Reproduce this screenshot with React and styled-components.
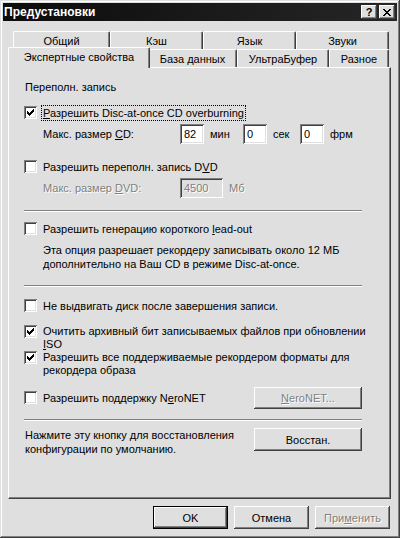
import React from "react";
import styled, { createGlobalStyle, css } from "styled-components";

const FACE = "#dfdfdf";
const SHADOW = "#808080";
const DARK = "#404040";
const LIGHT = "#ffffff";

const GlobalStyle = createGlobalStyle`
  html, body {
    margin: 0;
    padding: 0;
    background: ${FACE};
  }
  body {
    font-family: "Liberation Sans", Arial, sans-serif;
    font-size: 11px;
    color: #000;
  }
`;

const raised = css`
  box-shadow: inset -1px -1px ${DARK}, inset 1px 1px ${LIGHT},
    inset -2px -2px ${SHADOW}, inset 2px 2px ${FACE};
`;

const sunken = css`
  box-shadow: inset 1px 1px ${SHADOW}, inset -1px -1px ${LIGHT},
    inset 2px 2px ${DARK}, inset -2px -2px ${FACE};
`;

const disabledText = css`
  color: ${SHADOW};
  text-shadow: 1px 1px ${LIGHT};
`;

const Window = styled.div`
  width: 400px;
  height: 538px;
  box-sizing: border-box;
  padding: 3px;
  background: ${FACE};
  box-shadow: inset -1px -1px ${DARK}, inset 1px 1px ${FACE},
    inset -2px -2px ${SHADOW}, inset 2px 2px ${LIGHT};
  display: flex;
  flex-direction: column;
`;

const TitleBar = styled.div`
  height: 18px;
  display: flex;
  align-items: center;
  padding: 0 2px 0 1px;
  background: linear-gradient(to right, #0c0c0c, #262626);
  color: #fff;
`;

const Title = styled.div`
  flex: 1;
  font-weight: bold;
  font-size: 12px;
`;

const CaptionButton = styled.div`
  width: 16px;
  height: 14px;
  margin-left: ${({ $gap }) => $gap}px;
  background: ${FACE};
  ${raised};
  display: flex;
  align-items: center;
  justify-content: center;
  color: #000;
  font-weight: bold;
  font-size: 11px;
  line-height: 1;
`;

const Body = styled.div`
  flex: 1;
  display: flex;
  flex-direction: column;
  padding: 10px 6px 0 5px;
`;

const TabRow = styled.div`
  display: flex;
  align-items: flex-start;
  height: 18px;
  padding-left: ${({ $indent }) => $indent}px;
`;

const Tab = styled.div`
  width: ${({ $w }) => $w}px;
  height: 18px;
  box-sizing: border-box;
  flex: none;
  display: flex;
  align-items: center;
  justify-content: center;
  background: ${FACE};
  border-top: 1px solid ${LIGHT};
  border-left: 1px solid ${LIGHT};
  border-right: 1px solid ${DARK};
  border-radius: 2px 2px 0 0;
  box-shadow: inset -1px 0 ${SHADOW};
  white-space: nowrap;
  ${({ $active, $w }) =>
    $active &&
    css`
      position: relative;
      z-index: 2;
      width: ${$w + 4}px;
      height: 21px;
      margin: -2px -2px 0 -2px;
      padding-bottom: 2px;
    `}
`;

const Panel = styled.div`
  height: 432px;
  box-sizing: border-box;
  border-top: 1px solid ${LIGHT};
  border-left: 1px solid ${LIGHT};
  border-right: 1px solid ${DARK};
  border-bottom: 1px solid ${DARK};
  box-shadow: inset -1px -1px ${SHADOW};
  padding: 12px 28px 0 15px;
  display: flex;
  flex-direction: column;
`;

const Heading = styled.div`
  line-height: 14px;
  padding-left: 1px;
`;

const CheckRow = styled.div`
  display: flex;
  align-items: flex-start;
  margin-top: ${({ $top }) => $top || 0}px;
`;

const Box = styled.div`
  width: 13px;
  height: 13px;
  flex: none;
  box-sizing: border-box;
  background: #fff;
  ${sunken};
  display: flex;
  align-items: center;
  justify-content: center;
`;

const Label = styled.div`
  margin-left: 6px;
  line-height: ${({ $lh }) => $lh || 14}px;
  white-space: nowrap;
  ${({ $focus }) =>
    $focus &&
    css`
      outline: 1px dotted #000;
      outline-offset: 0;
      margin-left: 5px;
      padding: 0 1px;
    `}
`;

const SizeRow = styled.div`
  display: flex;
  align-items: center;
  height: 20px;
  margin-top: ${({ $top }) => $top}px;
  padding-left: 19px;
  ${({ $disabled }) => $disabled && disabledText};
`;

const SizeLabel = styled.div`
  width: 137px;
  flex: none;
`;

const Field = styled.div`
  width: ${({ $w }) => $w}px;
  height: 20px;
  box-sizing: border-box;
  flex: none;
  padding: 3px 3px 0 4px;
  line-height: 14px;
  background: ${({ $disabled }) => ($disabled ? FACE : "#fff")};
  ${sunken};
`;

const Unit = styled.div`
  width: ${({ $w }) => $w}px;
  flex: none;
  box-sizing: border-box;
  padding-left: 6px;
`;

const Separator = styled.div`
  height: 0;
  border-top: 1px solid ${SHADOW};
  border-bottom: 1px solid ${LIGHT};
  margin-top: ${({ $top }) => $top}px;
`;

const Note = styled.div`
  margin-top: ${({ $top }) => $top}px;
  padding-left: 19px;
  line-height: 14px;
  white-space: nowrap;
`;

const ActionRow = styled.div`
  display: flex;
  justify-content: space-between;
  align-items: ${({ $align }) => $align || "center"};
  margin-top: ${({ $top }) => $top}px;
`;

const ActionText = styled.div`
  line-height: 14px;
  padding-left: 1px;
  white-space: nowrap;
`;

const Button = styled.div`
  width: ${({ $w }) => $w || 75}px;
  height: ${({ $h }) => $h || 23}px;
  box-sizing: border-box;
  flex: none;
  display: flex;
  align-items: center;
  justify-content: center;
  background: ${FACE};
  ${raised};
  ${({ $disabled }) => $disabled && disabledText};
  ${({ $default }) =>
    $default &&
    css`
      border: 1px solid #000;
      box-shadow: inset -1px -1px ${DARK}, inset 1px 1px ${LIGHT},
        inset -2px -2px ${SHADOW};
    `}
`;

const Footer = styled.div`
  display: flex;
  justify-content: flex-end;
  gap: 6px;
  margin-top: 7px;
  padding-right: 1px;
`;

const Key = styled.span`
  text-decoration: underline;
`;

const Tick = () => (
  <svg width="7" height="7" viewBox="0 0 7 7" shapeRendering="crispEdges">
    <path
      fill="#000"
      d="M6 0h1v1h-1zM5 1h2v1h-2zM0 2h1v1h-1zM4 2h3v1h-3zM0 3h2v1h-2zM3 3h3v1h-3zM0 4h5v1h-5zM1 5h3v1h-3zM2 6h1v1h-1z"
    />
  </svg>
);

const CloseGlyph = () => (
  <svg width="8" height="7" viewBox="0 0 8 7" shapeRendering="crispEdges">
    <path
      fill="#000"
      d="M0 0h2v1h-2zM6 0h2v1h-2zM1 1h2v1h-2zM5 1h2v1h-2zM2 2h4v1h-4zM3 3h2v1h-2zM2 4h4v1h-4zM1 5h2v1h-2zM5 5h2v1h-2zM0 6h2v1h-2zM6 6h2v1h-2z"
    />
  </svg>
);

const Check = ({ checked, top, lh, focus, children }) => (
  <CheckRow $top={top}>
    <Box>{checked && <Tick />}</Box>
    <Label $lh={lh} $focus={focus}>
      {children}
    </Label>
  </CheckRow>
);

const backTabs = [
  { label: "Общий", w: 97 },
  { label: "Кэш", w: 93 },
  { label: "Язык", w: 93 },
  { label: "Звуки", w: 93 },
];

const frontTabs = [
  { label: "Экспертные свойства", w: 138, active: true },
  { label: "База данных", w: 89 },
  { label: "УльтраБуфер", w: 92 },
  { label: "Разное", w: 60 },
];

export default function App() {
  return (
    <>
      <GlobalStyle />
      <Window>
        <TitleBar>
          <Title>Предустановки</Title>
          <CaptionButton $gap={0}>?</CaptionButton>
          <CaptionButton $gap={2}>
            <CloseGlyph />
          </CaptionButton>
        </TitleBar>
        <Body>
          <TabRow $indent={5}>
            {backTabs.map((t) => (
              <Tab key={t.label} $w={t.w}>
                {t.label}
              </Tab>
            ))}
          </TabRow>
          <TabRow $indent={2}>
            {frontTabs.map((t) => (
              <Tab key={t.label} $w={t.w} $active={t.active}>
                {t.label}
              </Tab>
            ))}
          </TabRow>
          <Panel>
            <Heading>Переполн. запись</Heading>
            <Check checked top={12} focus>
              <Key>Р</Key>азрешить Disc-at-once CD overburning
            </Check>
            <SizeRow $top={4}>
              <SizeLabel>
                Макс. размер <Key>C</Key>D:
              </SizeLabel>
              <Field $w={24}>82</Field>
              <Unit $w={39}>мин</Unit>
              <Field $w={24}>0</Field>
              <Unit $w={33}>сек</Unit>
              <Field $w={24}>0</Field>
              <Unit $w={40}>фрм</Unit>
            </SizeRow>
            <Check top={16}>
              Разрешить переполн. запись D<Key>V</Key>D
            </Check>
            <SizeRow $top={4} $disabled>
              <SizeLabel>
                Макс. размер <Key>D</Key>VD:
              </SizeLabel>
              <Field $w={43} $disabled>
                4500
              </Field>
              <Unit $w={30}>Мб</Unit>
            </SizeRow>
            <Separator $top={12} />
            <Check top={10}>
              Разрешить генерацию короткого <Key>l</Key>ead-out
            </Check>
            <Note $top={7}>
              Эта опция разрешает рекордеру записывать около 12 МБ
              <br />
              дополнительно на Ваш CD в режиме Disc-at-once.
            </Note>
            <Separator $top={14} />
            <Check top={12}>Не выдвигать диск после завершения записи.</Check>
            <Check checked top={12} lh={13}>
              Очитить архивный бит записываемых файлов при обновлении
              <br />
              <Key>I</Key>SO
            </Check>
            <Check checked lh={13}>
              Разрешить все поддерживаемые рекордером форматы для
              <br />
              рекордера образа
            </Check>
            <ActionRow $top={10}>
              <Check>
                Разрешить поддержку N<Key>e</Key>roNET
              </Check>
              <Button $w={108} $h={22} $disabled>
                <span>
                  <Key>N</Key>eroNET...
                </span>
              </Button>
            </ActionRow>
            <Separator $top={10} />
            <ActionRow $top={7} $align="flex-start">
              <ActionText>
                Нажмите эту кнопку для восстановления
                <br />
                конфигурации по умолчанию.
              </ActionText>
              <Button $w={108}>Восстан.</Button>
            </ActionRow>
          </Panel>
          <Footer>
            <Button $default>OK</Button>
            <Button>Отмена</Button>
            <Button $disabled>
              <span>
                При<Key>м</Key>енить
              </span>
            </Button>
          </Footer>
        </Body>
      </Window>
    </>
  );
}
